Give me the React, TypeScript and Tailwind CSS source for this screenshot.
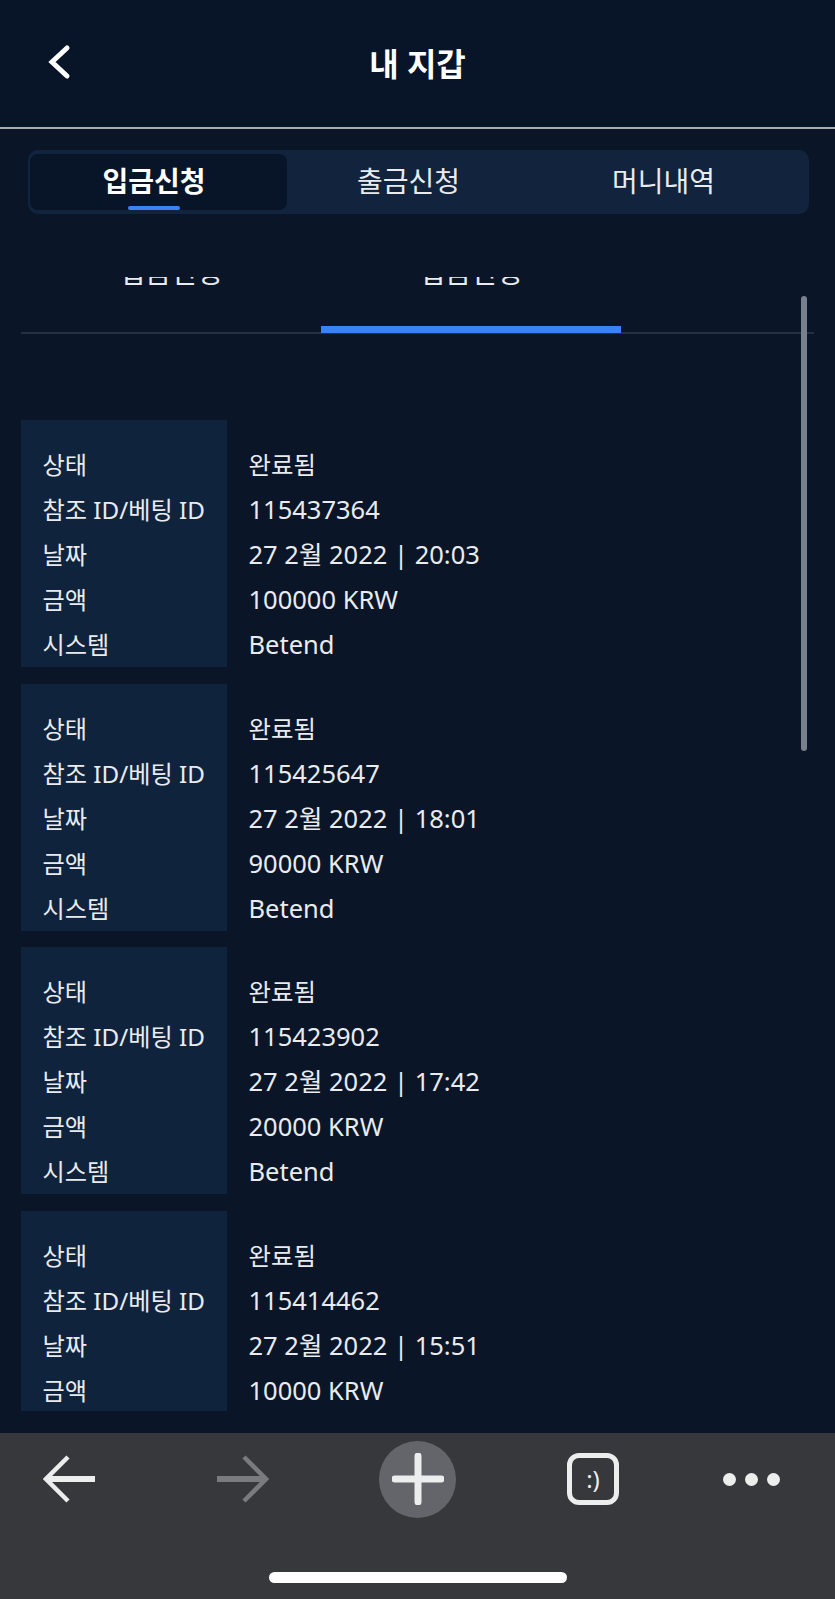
const sans = "font-['Noto_Sans','Noto_Sans_CJK_KR',sans-serif]";

const cards = [
  ["115437364", "27 2월 2022 | 20:03", "100000 KRW"],
  ["115425647", "27 2월 2022 | 18:01", "90000 KRW"],
  ["115423902", "27 2월 2022 | 17:42", "20000 KRW"],
  ["115414462", "27 2월 2022 | 15:51", "10000 KRW"],
];

function Card({ id, date, amount }: { id: string; date: string; amount: string }) {
  const rows = [
    ["상태", "완료됨"],
    ["참조 ID/베팅 ID", id],
    ["날짜", date],
    ["금액", amount],
    ["시스템", "Betend"],
  ];
  return (
    <div className="flex h-[247px] shrink-0 overflow-hidden">
      <div className="w-[206px] shrink-0 bg-[#10233d] pt-[22px] pl-[21.5px]">
        {rows.map((r) => (
          <div key={r[0]} className="h-[45px] whitespace-nowrap text-[24.2px] leading-[45px] text-[#e9ebee]">
            {r[0]}
          </div>
        ))}
      </div>
      <div className="pt-[22px] pl-[21.5px]">
        {rows.map((r, i) => (
          <div
            key={r[0]}
            className={
              i === 0
                ? "h-[45px] whitespace-nowrap text-[24.4px] leading-[45px] text-[#e9ebee]"
                : "h-[45px] whitespace-nowrap text-[25.5px] leading-[45px] text-[#e9ebee]"
            }
          >
            {r[1]}
          </div>
        ))}
      </div>
    </div>
  );
}

export default function App() {
  return (
    <div className={`relative flex h-[1599px] w-[835px] flex-col overflow-hidden bg-[#0a1628] ${sans}`}>
      <header className="relative flex h-[129px] shrink-0 items-start justify-center border-b-2 border-[#a9abae] bg-[#081528] pt-[40px]">
        <svg className="absolute left-[46px] top-[43px]" width="26" height="38" viewBox="0 0 26 38" fill="none">
          <path d="M21 5 L6 19 L21 33" stroke="#fff" strokeWidth="5" strokeLinecap="round" strokeLinejoin="miter" />
        </svg>
        <h1 className="text-[32px] font-bold leading-[48px] text-white">내 지갑</h1>
      </header>

      <main className="flex min-h-0 flex-1 flex-col">
        <div className="ml-[28px] mt-[21px] flex h-[64px] w-[781px] shrink-0 rounded-[10px] bg-[#11233d] p-[4px] pl-[2px]">
          <div className="relative flex w-[257px] items-center justify-center rounded-[8px] bg-[#081528] pb-[2px] pr-[9px] text-[28px] font-bold text-white">
            입금신청
            <span className="absolute bottom-0 left-[98px] h-[4px] w-[52px] rounded-full bg-[#3b82f6]" />
          </div>
          <div className="flex w-[254px] items-center justify-center pb-[2px] pr-[11px] text-[28px] text-[#e9ebee]">출금신청</div>
          <div className="flex w-[256px] items-center justify-center pb-[2px] pr-[11px] text-[28px] text-[#e9ebee]">머니내역</div>
        </div>

        <div className="mx-[21px] mt-[63px] flex h-[57px] shrink-0 border-b-2 border-[#222f44]">
          <div className="flex h-[55px] w-[300px] items-start justify-center overflow-hidden">
            <span className="-mt-[21px] text-[28px] leading-[32px] text-[#e9ebee]">입금신청</span>
          </div>
          <div className="relative h-[55px] w-[300px]">
            <div className="flex h-[55px] items-start justify-center overflow-hidden">
              <span className="-mt-[21px] text-[28px] leading-[32px] text-[#e9ebee]">입금신청</span>
            </div>
            <span className="absolute -bottom-px left-0 right-0 h-[7px] bg-[#3b82f6]" />
          </div>
        </div>

        <div className="mx-[21px] mt-[86px] flex h-[991px] shrink-0 flex-col gap-[16.5px] overflow-hidden">
          {cards.map((c) => (
            <Card key={c[0]} id={c[0]} date={c[1]} amount={c[2]} />
          ))}
        </div>
      </main>

      <div className="absolute left-[801px] top-[296px] h-[455px] w-[6px] rounded-full bg-[#77808c]" />

      <footer className="relative flex h-[166px] shrink-0 flex-col items-center bg-[#37383c]">
        <div className="flex h-[92px] w-full items-center pl-[43px]">
          <svg width="52" height="48" viewBox="0 0 52 48" fill="none">
            <path d="M52 24 H4" stroke="#eceded" strokeWidth="6" />
            <path d="M25 2 L3 24 L25 46" stroke="#eceded" strokeWidth="4.5" />
          </svg>
          <svg className="ml-[122px]" width="52" height="48" viewBox="0 0 52 48" fill="none">
            <path d="M0 24 H48" stroke="#7a7b7e" strokeWidth="6" />
            <path d="M27 2 L49 24 L27 46" stroke="#7a7b7e" strokeWidth="4.5" />
          </svg>
          <div className="ml-[110px] flex h-[77px] w-[77px] items-center justify-center rounded-full bg-[#63656a]">
            <svg width="52" height="52" viewBox="0 0 52 52" fill="none">
              <path d="M26 3 V49 M3 26 H49" stroke="#eceded" strokeWidth="7" strokeLinecap="round" />
            </svg>
          </div>
          <div className="ml-[111px] flex h-[52px] w-[52px] items-center justify-center rounded-[12px] border-[5px] border-[#eceded] text-[24px] font-normal leading-none text-[#eceded]">
            :)
          </div>
          <div className="ml-[104px] flex w-[57px] justify-between">
            <span className="h-[13px] w-[13px] rounded-full bg-[#eceded]" />
            <span className="h-[13px] w-[13px] rounded-full bg-[#eceded]" />
            <span className="h-[13px] w-[13px] rounded-full bg-[#eceded]" />
          </div>
        </div>
        <div className="mt-[47px] h-[11px] w-[298px] rounded-full bg-white" />
      </footer>
    </div>
  );
}
